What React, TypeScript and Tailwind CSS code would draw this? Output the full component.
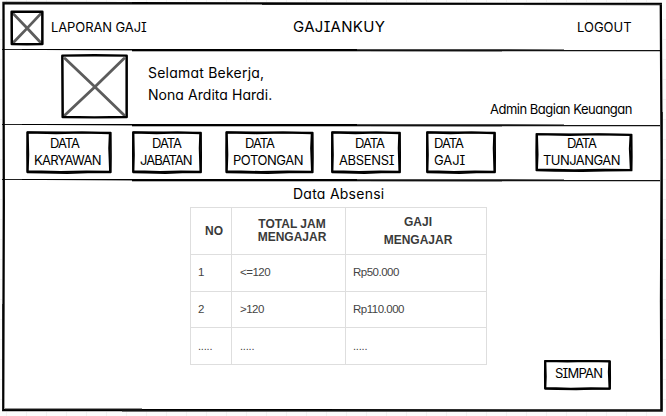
import type { ReactNode } from "react";

const HAND = "font-['Inter','Noto_Sans',sans-serif] [font-feature-settings:'cv11','cv08'] text-black whitespace-pre";

function SketchBorder() {
  return (
    <svg
      className="pointer-events-none absolute inset-0 h-full w-full overflow-visible"
      viewBox="0 0 100 100"
      preserveAspectRatio="none"
      fill="none"
      stroke="#000"
      strokeLinejoin="round"
    >
      <path strokeWidth="2" vectorEffect="non-scaling-stroke" d="M2 3.5 L35 5 L65 3.5 L97.5 5 L96.8 40 L97.8 95 L70 94 L40 95.5 L18 94 L2 93.5 L2.6 55 Z" />
      <path strokeWidth="1.7" vectorEffect="non-scaling-stroke" d="M1.4 2.5 L50 3.2 L98.6 4 L98.8 60 L98.6 96 L72 96.5 L48 98 L20 97 L1.4 96 L1.2 50 Z" />
    </svg>
  );
}

function CrossBox({ className }: { className: string }) {
  return (
    <div className={`relative shrink-0 ${className}`}>
      <svg className="block h-full w-full overflow-visible" viewBox="0 0 100 100" preserveAspectRatio="none" fill="none" strokeLinejoin="round">
        <path d="M6 7 L50 50 L94 94 M94 7 L50 51 L6 94" stroke="#5c5c5c" strokeWidth="2.8" strokeLinecap="round" vectorEffect="non-scaling-stroke" />
        <path d="M2 2.5 L50 2 L98 2.5 L98 97 L50 97.5 L2.5 97 Z" stroke="#000" strokeWidth="2.5" vectorEffect="non-scaling-stroke" />
      </svg>
    </div>
  );
}

function Rule() {
  return (
    <svg className="block h-[4px] w-[660px] shrink-0" viewBox="0 0 660 4">
      <path d="M0 1 H60 L130 1 V2.6 L40 2 L0 2 Z" fill="#222" />
      <path d="M20 1 H355 V3 H130 V2 H20 Z" fill="#000" />
      <path d="M130 3 H500 V3.7 H130 Z" fill="#999" />
      <path d="M355 1.2 L562 1.4 V2 H658 V3.2 H480 L355 3 Z" fill="#111" />
    </svg>
  );
}

function NavButton({ className, children }: { className: string; children: ReactNode }) {
  return (
    <button className={`relative flex shrink-0 flex-col justify-center pb-px text-left text-[13px] leading-[17px] ${HAND} ${className}`}>
      <SketchBorder />
      {children}
    </button>
  );
}

const th = "border border-[#dedede] p-0 text-[12px] font-bold text-[#3a3a3a]";
const td = "border border-[#dedede] p-0 pb-px pl-[7px] text-[11.5px] leading-[13px] tracking-[-0.5px] text-[#444]";
const dots = "border border-[#dedede] p-0 pl-[7px] text-[11px] leading-[13px] tracking-[-0.2px] text-[#444]";

export default function App() {
  return (
    <div className="h-[416px] w-[666px] overflow-hidden bg-[#fcfcfc] bg-[linear-gradient(#f1f1f1_1px,transparent_1px),linear-gradient(90deg,#f1f1f1_1px,transparent_1px)] bg-[length:20px_20px] bg-[position:6px_19px] pt-[2px] pl-[2px]">
      <div className="relative flex h-[410px] w-[661px] flex-col bg-white">
        <svg className="pointer-events-none absolute inset-0 h-full w-full overflow-visible" viewBox="0 0 661 410" fill="none">
          <path d="M1.5 1 L370 1.6 L658.8 2 L659.6 160 L659 300 L659.4 408.4 L300 408.2 L1.2 408 L1.8 200 Z" stroke="#000" strokeWidth="2.3" />
          <path d="M1 .8 H130 M260 2.5 H660 M3 407 H140 M120 409 H661 M660.4 110 V408 M.6 302 V408" stroke="#222" strokeWidth="1" />
        </svg>

        <header className="flex h-[46px] shrink-0 items-start pl-[9px]">
          <CrossBox className="mt-[9px] h-[34px] w-[32px]" />
          <span className={`mt-[15px] ml-[8px] w-[242px] text-[13px] leading-[20px] tracking-[-0.1px] ${HAND}`}>LAPORAN GAJI</span>
          <h1 className={`mt-[15px] w-[284px] text-[15px] leading-[20px] tracking-[0.3px] ${HAND}`}>GAJIANKUY</h1>
          <span className={`mt-[15px] text-[13px] leading-[20px] ${HAND}`}>LOGOUT</span>
        </header>
        <Rule />

        <section className="flex h-[71px] shrink-0 items-start pl-[59px]">
          <CrossBox className="mt-[2px] h-[65px] w-[67px]" />
          <div className={`mt-[10px] ml-[20px] w-[342px] text-[14px] leading-[22px] ${HAND}`}>
            <p className="tracking-[0.22px]">Selamat Bekerja,</p>
            <p className="tracking-[0.05px]">Nona Ardita Hardi.</p>
          </div>
          <p className={`mt-[47px] text-[13px] leading-[20px] tracking-[-0.5px] ${HAND}`}>Admin Bagian Keuangan</p>
        </section>
        <Rule />

        <nav className="flex h-[51px] shrink-0 items-start pt-[4px] pl-[24px]">
          <NavButton className="h-[43px] w-[86px] pl-[8px]">
            <div className="pl-[16px] tracking-[-1px]">DATA</div>
            <div className="tracking-[-0.75px]">KARYAWAN</div>
          </NavButton>
          <NavButton className="ml-[20px] h-[43px] w-[70px] pl-[8px]">
            <div className="pl-[12px] tracking-[-1px]">DATA</div>
            <div className="tracking-[-1px]">JABATAN</div>
          </NavButton>
          <NavButton className="ml-[23px] h-[43px] w-[89px] pl-[8px]">
            <div className="pl-[12px] tracking-[-1px]">DATA</div>
            <div className="tracking-[-0.45px]">POTONGAN</div>
          </NavButton>
          <NavButton className="ml-[17px] h-[43px] w-[70px] pl-[8px]">
            <div className="pl-[16px] tracking-[-1px]">DATA</div>
            <div className="tracking-[-0.35px]">ABSENSI</div>
          </NavButton>
          <NavButton className="ml-[25px] h-[43px] w-[70px] pl-[8px]">
            <div className="tracking-[-1px]">DATA</div>
            <div className="tracking-[-0.1px]">GAJI</div>
          </NavButton>
          <NavButton className="mt-[2px] ml-[39px] h-[39px] w-[98px] pl-[8px]">
            <div className="pl-[24px] tracking-[-1px]">DATA</div>
            <div className="tracking-[-0.55px]">TUNJANGAN</div>
          </NavButton>
        </nav>
        <Rule />

        <main className="flex flex-col">
          <h2 className={`h-[25px] pt-[2px] pl-[291px] text-[14px] leading-[20px] tracking-[0.25px] ${HAND}`}>Data Absensi</h2>
          <table className="ml-[188px] w-[296px] table-fixed border-collapse font-['Liberation_Sans',Arial,sans-serif]">
            <colgroup>
              <col className="w-[41px]" />
              <col className="w-[114px]" />
              <col className="w-[141px]" />
            </colgroup>
            <thead>
              <tr className="h-[47px]">
                <th className={th}><div className="pl-[6px]">NO</div></th>
                <th className={`${th} leading-[13px]`}>
                  <div className="pl-[7px]">TOTAL JAM<br />MENGAJAR</div>
                </th>
                <th className={`${th} leading-[18px]`}>
                  <div className="pl-[4px]">GAJI<br />MENGAJAR</div>
                </th>
              </tr>
            </thead>
            <tbody>
              <tr className="h-[37px]"><td className={td}>1</td><td className={`${td} pl-[8px]`}>&lt;=120</td><td className={td}>Rp50.000</td></tr>
              <tr className="h-[36px]"><td className={td}>2</td><td className={`${td} pl-[8px]`}>&gt;120</td><td className={td}>Rp110.000</td></tr>
              <tr className="h-[37px]"><td className={dots}>.....</td><td className={`${dots} pt-px pl-[8px]`}>.....</td><td className={dots}>.....</td></tr>
            </tbody>
          </table>
        </main>

        <div className="mt-[-5px] mr-[52px] flex justify-end">
          <button className={`relative h-[30px] w-[67px] pb-[4px] pl-[11px] text-left text-[13px] leading-[16px] tracking-[-0.8px] ${HAND}`}>
            <SketchBorder />
            SIMPAN
          </button>
        </div>
      </div>
    </div>
  );
}
